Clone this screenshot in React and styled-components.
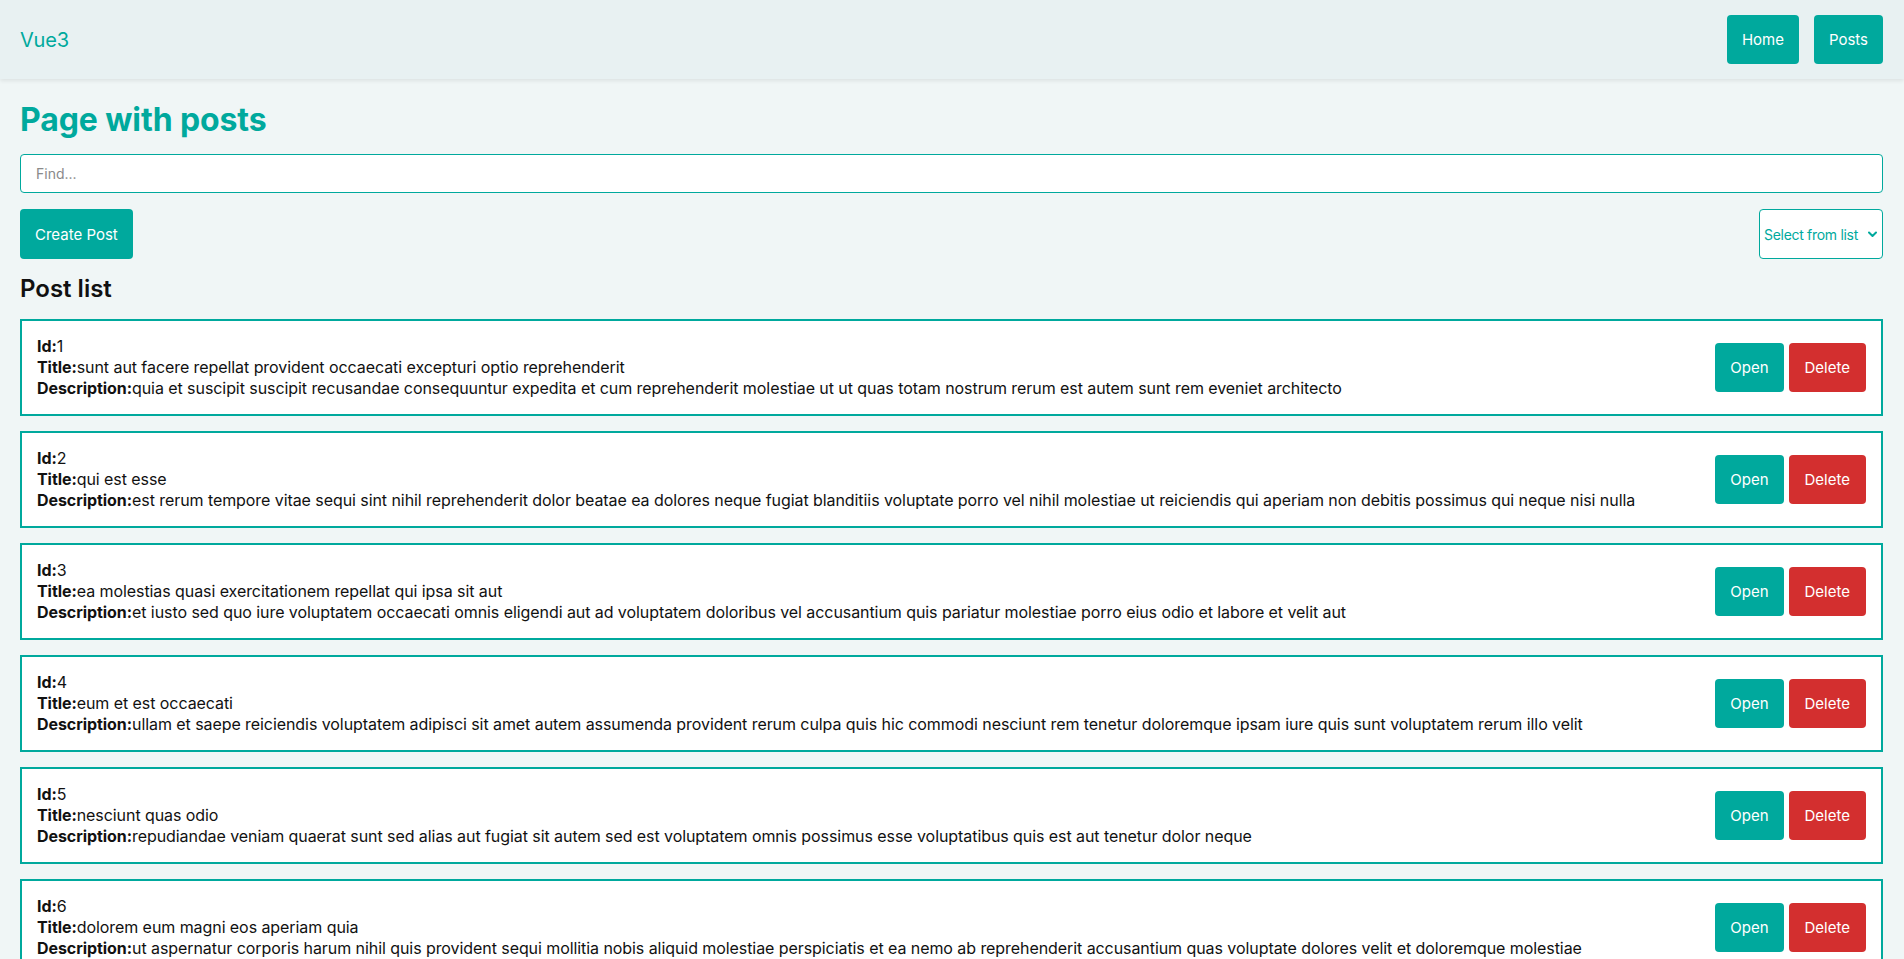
import React, { useState } from "react";
import styled, { createGlobalStyle } from "styled-components";

const TEAL = "#00a99d";
const RED = "#d32f2f";

const GlobalStyle = createGlobalStyle`
  * { box-sizing: border-box; }
  body {
    margin: 0;
    background: #f0f6f6;
    font-family: Inter, "Noto Sans", sans-serif;
    color: #111;
  }
`;

const Navbar = styled.nav`
  height: 79px;
  padding: 0 21px 0 20px;
  display: flex;
  align-items: center;
  justify-content: space-between;
  background: #e8f1f2;
  box-shadow: 0 2px 4px rgba(0, 0, 0, 0.08);
`;

const Brand = styled.div`
  font-size: 20px;
  color: ${TEAL};
  letter-spacing: -0.2px;
`;

const NavLinks = styled.div`
  display: flex;
  gap: 15px;
`;

const Button = styled.button`
  height: ${(p) => p.$h || 49}px;
  padding: 0 ${(p) => p.$px || 15}px;
  border: none;
  border-radius: 4px;
  background: ${(p) => (p.$danger ? RED : TEAL)};
  color: #fff;
  font-family: inherit;
  font-size: ${(p) => p.$fs || 15}px;
  cursor: pointer;
`;

const Page = styled.main`
  padding: 21px 21px 20px 20px;
`;

const Title = styled.h1`
  margin: 0 0 14px;
  font-size: 32px;
  line-height: 40px;
  font-weight: 700;
  color: ${TEAL};
  letter-spacing: -0.1px;
`;

const SearchInput = styled.input`
  display: block;
  width: 100%;
  height: 39px;
  padding: 0 15px;
  border: 1px solid ${TEAL};
  border-radius: 4px;
  background: #fff;
  font-family: inherit;
  font-size: 14px;
  outline: none;
  &::placeholder { color: #8a8a8a; }
`;

const ActionsRow = styled.div`
  margin-top: 16px;
  display: flex;
  justify-content: space-between;
  align-items: center;
`;

const SelectWrap = styled.div`
  position: relative;
  width: 124px;
  height: 50px;
`;

const Select = styled.select`
  appearance: none;
  width: 100%;
  height: 100%;
  padding: 0 0 0 4px;
  border: 1px solid ${TEAL};
  border-radius: 4px;
  background: #fff;
  color: ${TEAL};
  font-family: inherit;
  font-size: 14px;
  letter-spacing: -0.3px;
  outline: none;
`;

const Chevron = styled.svg`
  position: absolute;
  right: 6px;
  top: 22px;
  width: 9px;
  height: 7px;
  pointer-events: none;
`;

const SubTitle = styled.h2`
  margin: 15px 0 15px;
  font-size: 24px;
  line-height: 30px;
  font-weight: 600;
`;

const List = styled.div`
  display: flex;
  flex-direction: column;
  gap: 15px;
`;

const Card = styled.div`
  display: flex;
  align-items: center;
  justify-content: space-between;
  padding: 15px;
  border: 2px solid ${TEAL};
  background: #fff;
`;

const Info = styled.div`
  font-size: 16px;
  line-height: 21px;
  color: #111;
  letter-spacing: -0.07px;
`;

const Label = styled.b`
  font-weight: 700;
`;

const CardButtons = styled.div`
  display: flex;
  gap: 5px;
  flex-shrink: 0;
  margin-left: 20px;
`;

const posts = [
  {
    id: 1,
    title: "sunt aut facere repellat provident occaecati excepturi optio reprehenderit",
    body: "quia et suscipit suscipit recusandae consequuntur expedita et cum reprehenderit molestiae ut ut quas totam nostrum rerum est autem sunt rem eveniet architecto",
  },
  {
    id: 2,
    title: "qui est esse",
    body: "est rerum tempore vitae sequi sint nihil reprehenderit dolor beatae ea dolores neque fugiat blanditiis voluptate porro vel nihil molestiae ut reiciendis qui aperiam non debitis possimus qui neque nisi nulla",
  },
  {
    id: 3,
    title: "ea molestias quasi exercitationem repellat qui ipsa sit aut",
    body: "et iusto sed quo iure voluptatem occaecati omnis eligendi aut ad voluptatem doloribus vel accusantium quis pariatur molestiae porro eius odio et labore et velit aut",
  },
  {
    id: 4,
    title: "eum et est occaecati",
    body: "ullam et saepe reiciendis voluptatem adipisci sit amet autem assumenda provident rerum culpa quis hic commodi nesciunt rem tenetur doloremque ipsam iure quis sunt voluptatem rerum illo velit",
  },
  {
    id: 5,
    title: "nesciunt quas odio",
    body: "repudiandae veniam quaerat sunt sed alias aut fugiat sit autem sed est voluptatem omnis possimus esse voluptatibus quis est aut tenetur dolor neque",
  },
  {
    id: 6,
    title: "dolorem eum magni eos aperiam quia",
    body: "ut aspernatur corporis harum nihil quis provident sequi mollitia nobis aliquid molestiae perspiciatis et ea nemo ab reprehenderit accusantium quas voluptate dolores velit et doloremque molestiae",
  },
  {
    id: 7,
    title: "magnam facilis autem",
    body: "dolore placeat quibusdam ea quo vitae magni quis enim qui quis quo nemo aut saepe quidem repellat excepturi ut quia sunt ut sequi eos ea sed quas",
  },
];

export default function App() {
  const [query, setQuery] = useState("");
  return (
    <>
      <GlobalStyle />
      <Navbar>
        <Brand>Vue3</Brand>
        <NavLinks>
          <Button>Home</Button>
          <Button>Posts</Button>
        </NavLinks>
      </Navbar>
      <Page>
        <Title>Page with posts</Title>
        <SearchInput
          placeholder="Find..."
          value={query}
          onChange={(e) => setQuery(e.target.value)}
        />
        <ActionsRow>
          <Button $h={50}>Create Post</Button>
          <SelectWrap>
            <Select defaultValue="">
              <option value="" disabled>Select from list</option>
              <option value="title">By title</option>
              <option value="body">By description</option>
            </Select>
            <Chevron viewBox="0 0 9 7">
              <path d="M1 1.5 L4.5 5 L8 1.5" fill="none" stroke={TEAL} strokeWidth="2" strokeLinecap="round" strokeLinejoin="round" />
            </Chevron>
          </SelectWrap>
        </ActionsRow>
        <SubTitle>Post list</SubTitle>
        <List>
          {posts.map((p) => (
            <Card key={p.id}>
              <Info>
                <div><Label>Id:</Label>{p.id}</div>
                <div><Label>Title:</Label>{p.title}</div>
                <div><Label>Description:</Label>{p.body}</div>
              </Info>
              <CardButtons>
                <Button>Open</Button>
                <Button $danger $px={16}>Delete</Button>
              </CardButtons>
            </Card>
          ))}
        </List>
      </Page>
    </>
  );
}
